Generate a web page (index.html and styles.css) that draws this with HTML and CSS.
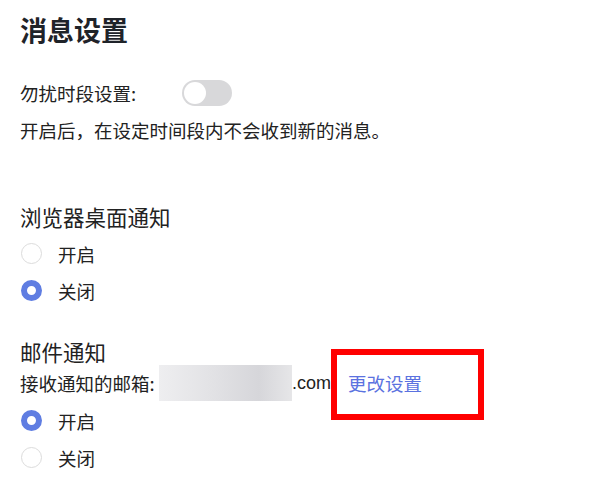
FILE: index.html
```html
<!DOCTYPE html>
<html lang="zh-CN">
<head>
    <meta charset="UTF-8">
    <meta name="viewport" content="width=device-width, initial-scale=1.0">
    <title>消息设置</title>
    <link rel="stylesheet" href="styles.css">
</head>
<body>

    <div class="page">
        <h1 class="title">消息设置</h1>

        <!-- 勿扰时段 -->
        <div class="dnd-row">
            <span class="label">勿扰时段设置:</span>
            <span class="switch"><span class="knob"></span></span>
        </div>
        <p class="desc">开启后，在设定时间段内不会收到新的消息。</p>

        <!-- 浏览器桌面通知 -->
        <h2 class="section-title browser">浏览器桌面通知</h2>
        <div class="radio-row"><span class="radio"></span><span>开启</span></div>
        <div class="radio-row"><span class="radio checked"></span><span>关闭</span></div>

        <!-- 邮件通知 -->
        <h2 class="section-title mail">邮件通知</h2>
        <div class="email-row">
            <span class="email-label">接收通知的邮箱:</span>
            <span class="email-blur"></span>
            <span class="email-tail">.com</span>
            <a class="change-link" href="#">更改设置</a>
        </div>
        <div class="radio-row"><span class="radio checked"></span><span>开启</span></div>
        <div class="radio-row"><span class="radio"></span><span>关闭</span></div>
    </div>

</body>
</html>
```

FILE: styles.css
```css
body {
    margin: 0;
    padding: 0;
    background-color: #fff;
    color: #222;
    font-family: "Microsoft YaHei", "Noto Sans CJK SC", sans-serif;
}

.page {
    padding: 0 20px;
}

.title {
    margin: 12px 0 0;
    font-size: 27px;
    line-height: 36px;
    font-weight: bold;
    color: #1f2329;
}

.dnd-row {
    margin-top: 32px;
    height: 26px;
    display: flex;
    align-items: center;
    font-size: 18.5px;
}

.dnd-row .label {
    width: 162px;
}

.switch {
    position: relative;
    width: 50px;
    height: 26px;
    border-radius: 13px;
    background-color: #d8d8da;
}

.switch .knob {
    position: absolute;
    top: 2px;
    left: 2px;
    width: 22px;
    height: 22px;
    border-radius: 50%;
    background-color: #fff;
}

.desc {
    margin: 12px 0 0;
    font-size: 18.5px;
    line-height: 24px;
}

.section-title {
    margin: 0;
    font-size: 21.5px;
    font-weight: normal;
    color: #222;
}

.section-title.browser {
    margin-top: 60px;
    line-height: 30px;
}

.section-title.mail {
    margin-top: 30px;
    line-height: 26px;
}

.radio-row {
    height: 37px;
    display: flex;
    align-items: center;
    gap: 16px;
    font-size: 18.5px;
    padding-left: 1px;
}

.browser + .radio-row {
    margin-top: 3px;
}

.radio {
    width: 21px;
    height: 21px;
    box-sizing: border-box;
    border-radius: 50%;
    border: 1.5px solid #dcdcdc;
    background-color: #fff;
}

.radio.checked {
    border: 6px solid #5f7de2;
}

.email-row {
    height: 36px;
    display: flex;
    align-items: center;
    font-size: 18.5px;
    line-height: 24px;
}

.email-row + .radio-row {
    margin-top: 1px;
}

.email-label {
    width: 139px;
}

.email-blur {
    width: 133px;
    height: 36px;
    background: linear-gradient(90deg, #eeeef0 0%, #e2e2e5 40%, #d6d6da 75%, #e6e6e8 100%);
}

.email-tail {
    font-family: "Liberation Sans", Arial, sans-serif;
    font-size: 18px;
}

.change-link {
    position: relative;
    margin-left: 17px;
    color: #5b72e0;
    text-decoration: none;
}

/* 红色标注框 */
.change-link::after {
    content: "";
    position: absolute;
    left: -17px;
    top: -22px;
    width: 153px;
    height: 71px;
    box-sizing: border-box;
    border: 6px solid #ff0000;
}
```
